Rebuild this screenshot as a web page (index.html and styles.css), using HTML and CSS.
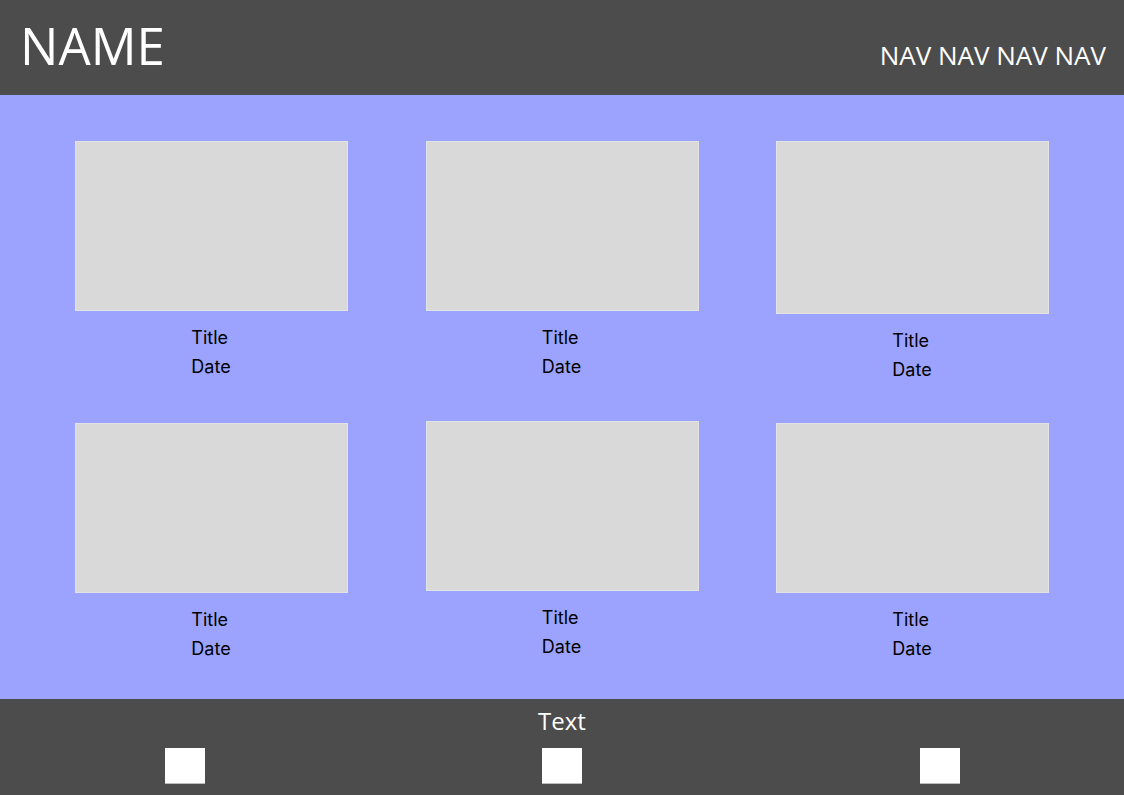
FILE: index.html
```html
<!DOCTYPE html>
<html lang="en">
<head>
    <meta charset="UTF-8">
    <meta name="viewport" content="width=device-width, initial-scale=1.0">
    <title>NAME</title>
    <link rel="stylesheet" href="styles.css">
</head>
<body>
    <!-- Top bar -->
    <header class="topBar">
        <div class="siteName">NAME</div>
        <nav class="navLinks">NAV NAV NAV NAV</nav>
    </header>

    <!-- Grid of posts -->
    <main class="postGrid">
        <div class="post">
            <div class="thumb"></div>
            <div class="caption"><div>Title</div><div>Date</div></div>
        </div>
        <div class="post">
            <div class="thumb"></div>
            <div class="caption"><div>Title</div><div>Date</div></div>
        </div>
        <div class="post">
            <div class="thumb tall"></div>
            <div class="caption"><div>Title</div><div>Date</div></div>
        </div>
        <div class="post">
            <div class="thumb"></div>
            <div class="caption"><div>Title</div><div>Date</div></div>
        </div>
        <div class="post raised">
            <div class="thumb"></div>
            <div class="caption"><div>Title</div><div>Date</div></div>
        </div>
        <div class="post">
            <div class="thumb"></div>
            <div class="caption"><div>Title</div><div>Date</div></div>
        </div>
    </main>

    <!-- Footer -->
    <footer class="bottomBar">
        <div class="footText">Text</div>
        <div class="footIcons">
            <span class="footBox"></span>
            <span class="footBox"></span>
            <span class="footBox"></span>
        </div>
    </footer>
</body>
</html>
```

FILE: styles.css
```css
/* General body styling */
body {
    margin: 0;
    font-family: "Open Sans", sans-serif;
    background-color: #9ba3ff;
}

/* Top bar */
.topBar {
    height: 95px;
    box-sizing: border-box;
    background-color: #4c4c4c;
    color: white;
    display: flex;
    justify-content: space-between;
    align-items: baseline;
    padding: 20px 18px 0 20px;
}

.siteName {
    font-size: 51px;
    line-height: 1;
}

.navLinks {
    font-size: 26px;
    line-height: 1;
}

/* Post grid */
.postGrid {
    height: 604px;
    box-sizing: border-box;
    padding: 46px 75px 0 75px;
    display: grid;
    grid-template-columns: repeat(3, 1fr);
    column-gap: 77.5px;
    row-gap: 43px;
    align-content: start;
}

.post {
    height: 239px;
}

.post.raised {
    margin-top: -2px;
}

.thumb {
    height: 170px;
    box-sizing: border-box;
    background-color: #d9d9d9;
    border: 1px solid #e2e2e2;
}

.thumb.tall {
    height: 173px;
}

.caption {
    width: fit-content;
    margin: 12px auto 0 auto;
    padding-right: 1px;
    font-family: Inter, sans-serif;
    font-size: 18px;
    line-height: 29px;
    color: #000;
    text-align: left;
}

/* Footer */
.bottomBar {
    height: 96px;
    box-sizing: border-box;
    background-color: #4c4c4c;
    color: white;
    padding-top: 10px;
    text-align: center;
}

.footText {
    font-size: 24px;
    line-height: 1;
}

.footIcons {
    display: flex;
    justify-content: center;
    gap: 337.5px;
    margin-top: 15px;
}

.footBox {
    width: 40px;
    height: 36px;
    box-sizing: border-box;
    background-color: white;
    border-bottom: 1px solid #bdbdbd;
}
```
